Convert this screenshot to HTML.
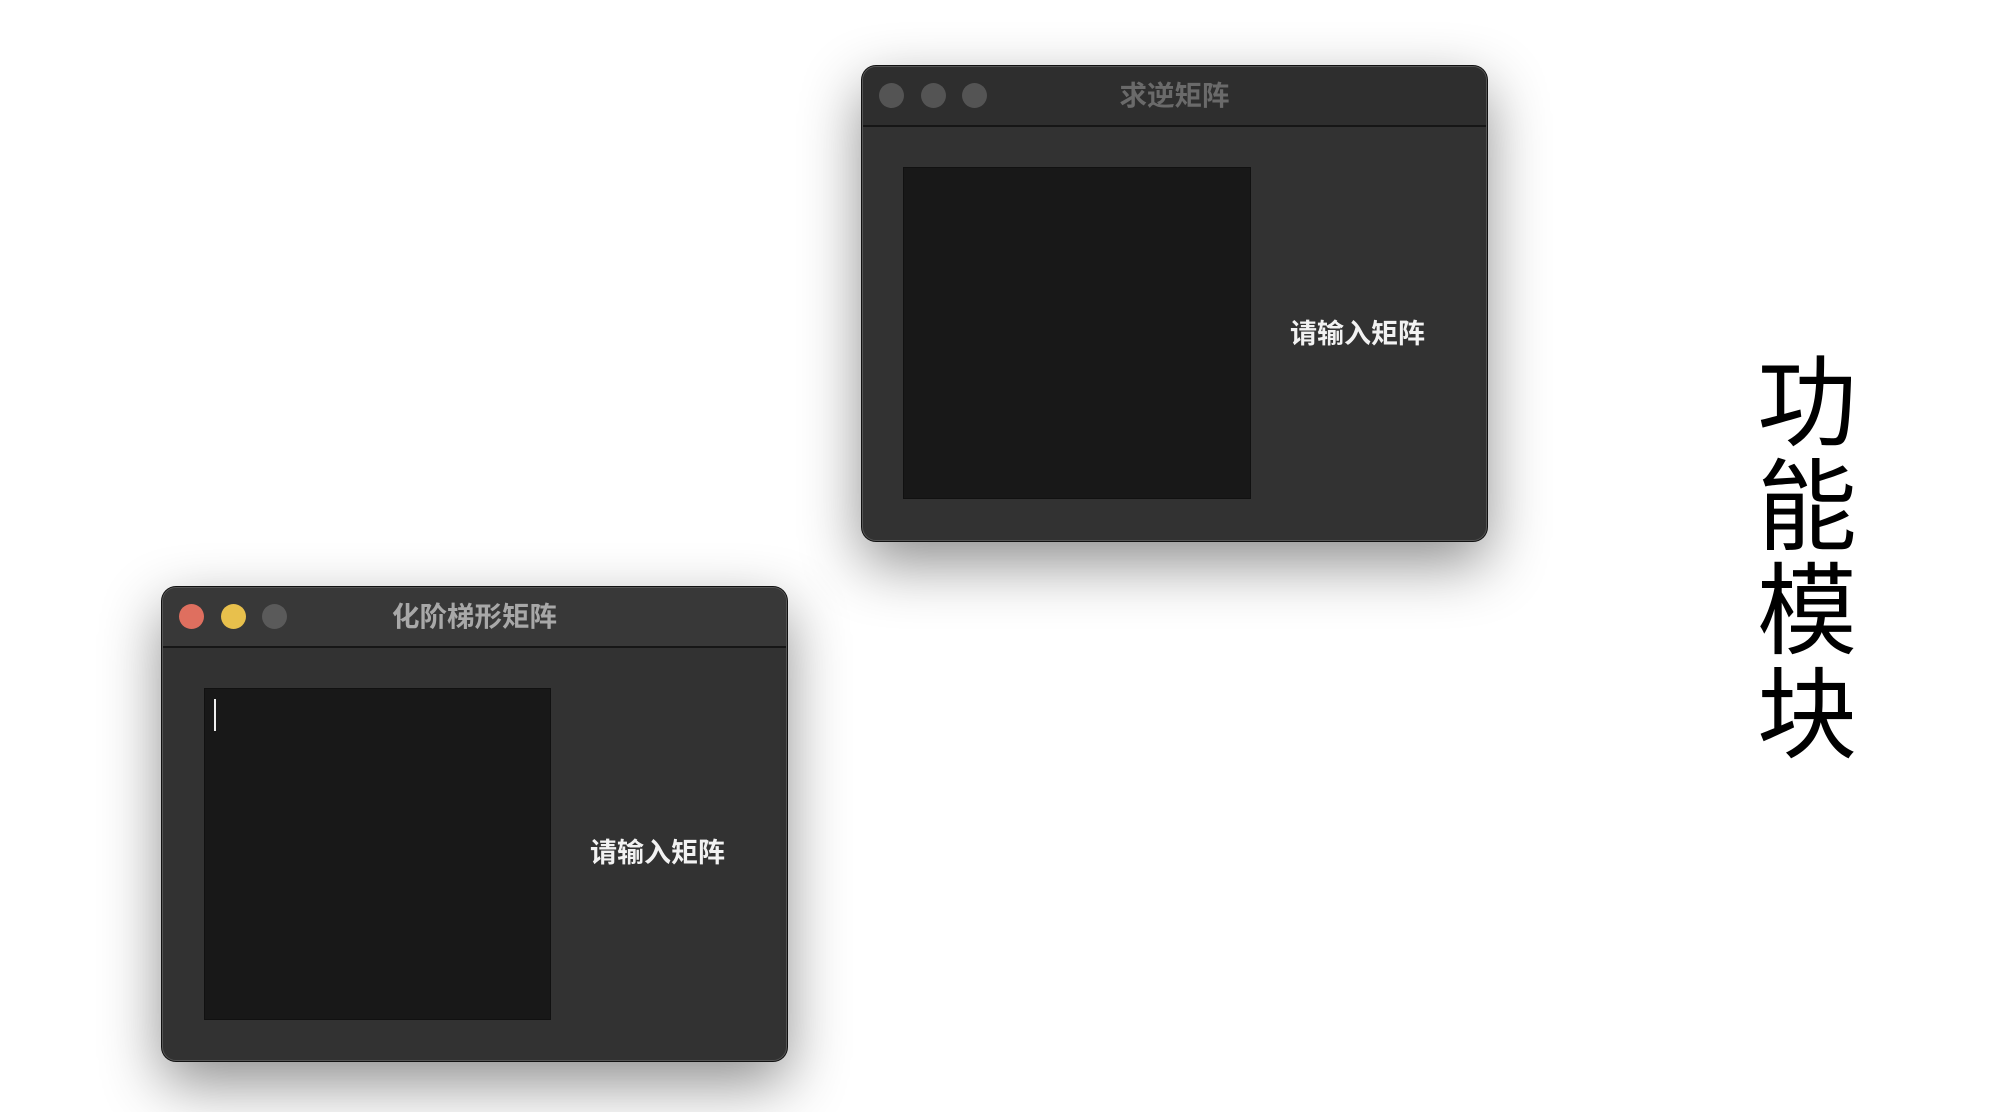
<!DOCTYPE html>
<html><head><meta charset="utf-8"><style>
html,body{margin:0;padding:0;background:#fff;width:1990px;height:1112px;overflow:hidden;position:relative;font-family:"Liberation Sans","Noto Sans CJK SC",sans-serif}
.win{position:absolute;background:#323232;border:1px solid #555;border-radius:14px;box-shadow:0 0 0 1px #111,0 22px 60px rgba(0,0,0,.45);overflow:hidden;box-sizing:border-box}
.tb{position:absolute;left:0;right:0;top:0;border-bottom:2px solid #161616}
.dot{position:absolute;width:25px;height:25px;border-radius:50%}
.title{position:absolute;left:0;right:0;text-align:center;font-size:27.5px;font-weight:bold}
.ta{position:absolute;background:#181818;border:1px solid #111}
.lbl{position:absolute;color:#f2f2f2;font-size:27px;font-weight:bold}
.vt{position:absolute;left:1755px;top:352px;width:104px;font-size:100px;line-height:104px;color:#000;text-align:center}
</style></head><body>

<div class="win" style="left:862px;top:66px;width:625px;height:475px">
  <div class="tb" style="height:58px;background:#2e2e2e"></div>
  <div class="dot" style="left:16px;top:16px;background:#545454"></div>
  <div class="dot" style="left:58px;top:16px;background:#545454"></div>
  <div class="dot" style="left:99px;top:16px;background:#545454"></div>
  <div class="title" style="top:6px;color:#6a6a6a">求逆矩阵</div>
  <div class="ta" style="left:40px;top:100px;width:346px;height:330px"></div>
  <div class="lbl" style="left:427px;top:245px">请输入矩阵</div>
</div>

<div class="win" style="left:162px;top:587px;width:625px;height:474px">
  <div class="tb" style="height:58px;background:#383838"></div>
  <div class="dot" style="left:16px;top:16px;background:#df6f5f"></div>
  <div class="dot" style="left:58px;top:16px;background:#e8c04c"></div>
  <div class="dot" style="left:99px;top:16px;background:#5a5a5a"></div>
  <div class="title" style="top:6px;color:#a8a8a8">化阶梯形矩阵</div>
  <div class="ta" style="left:41px;top:100px;width:345px;height:330px"><div style="position:absolute;left:9px;top:10px;width:2px;height:32px;background:#eee"></div></div>
  <div class="lbl" style="left:427px;top:243px">请输入矩阵</div>
</div>

<div class="vt">功<br>能<br>模<br>块</div>
</body></html>
